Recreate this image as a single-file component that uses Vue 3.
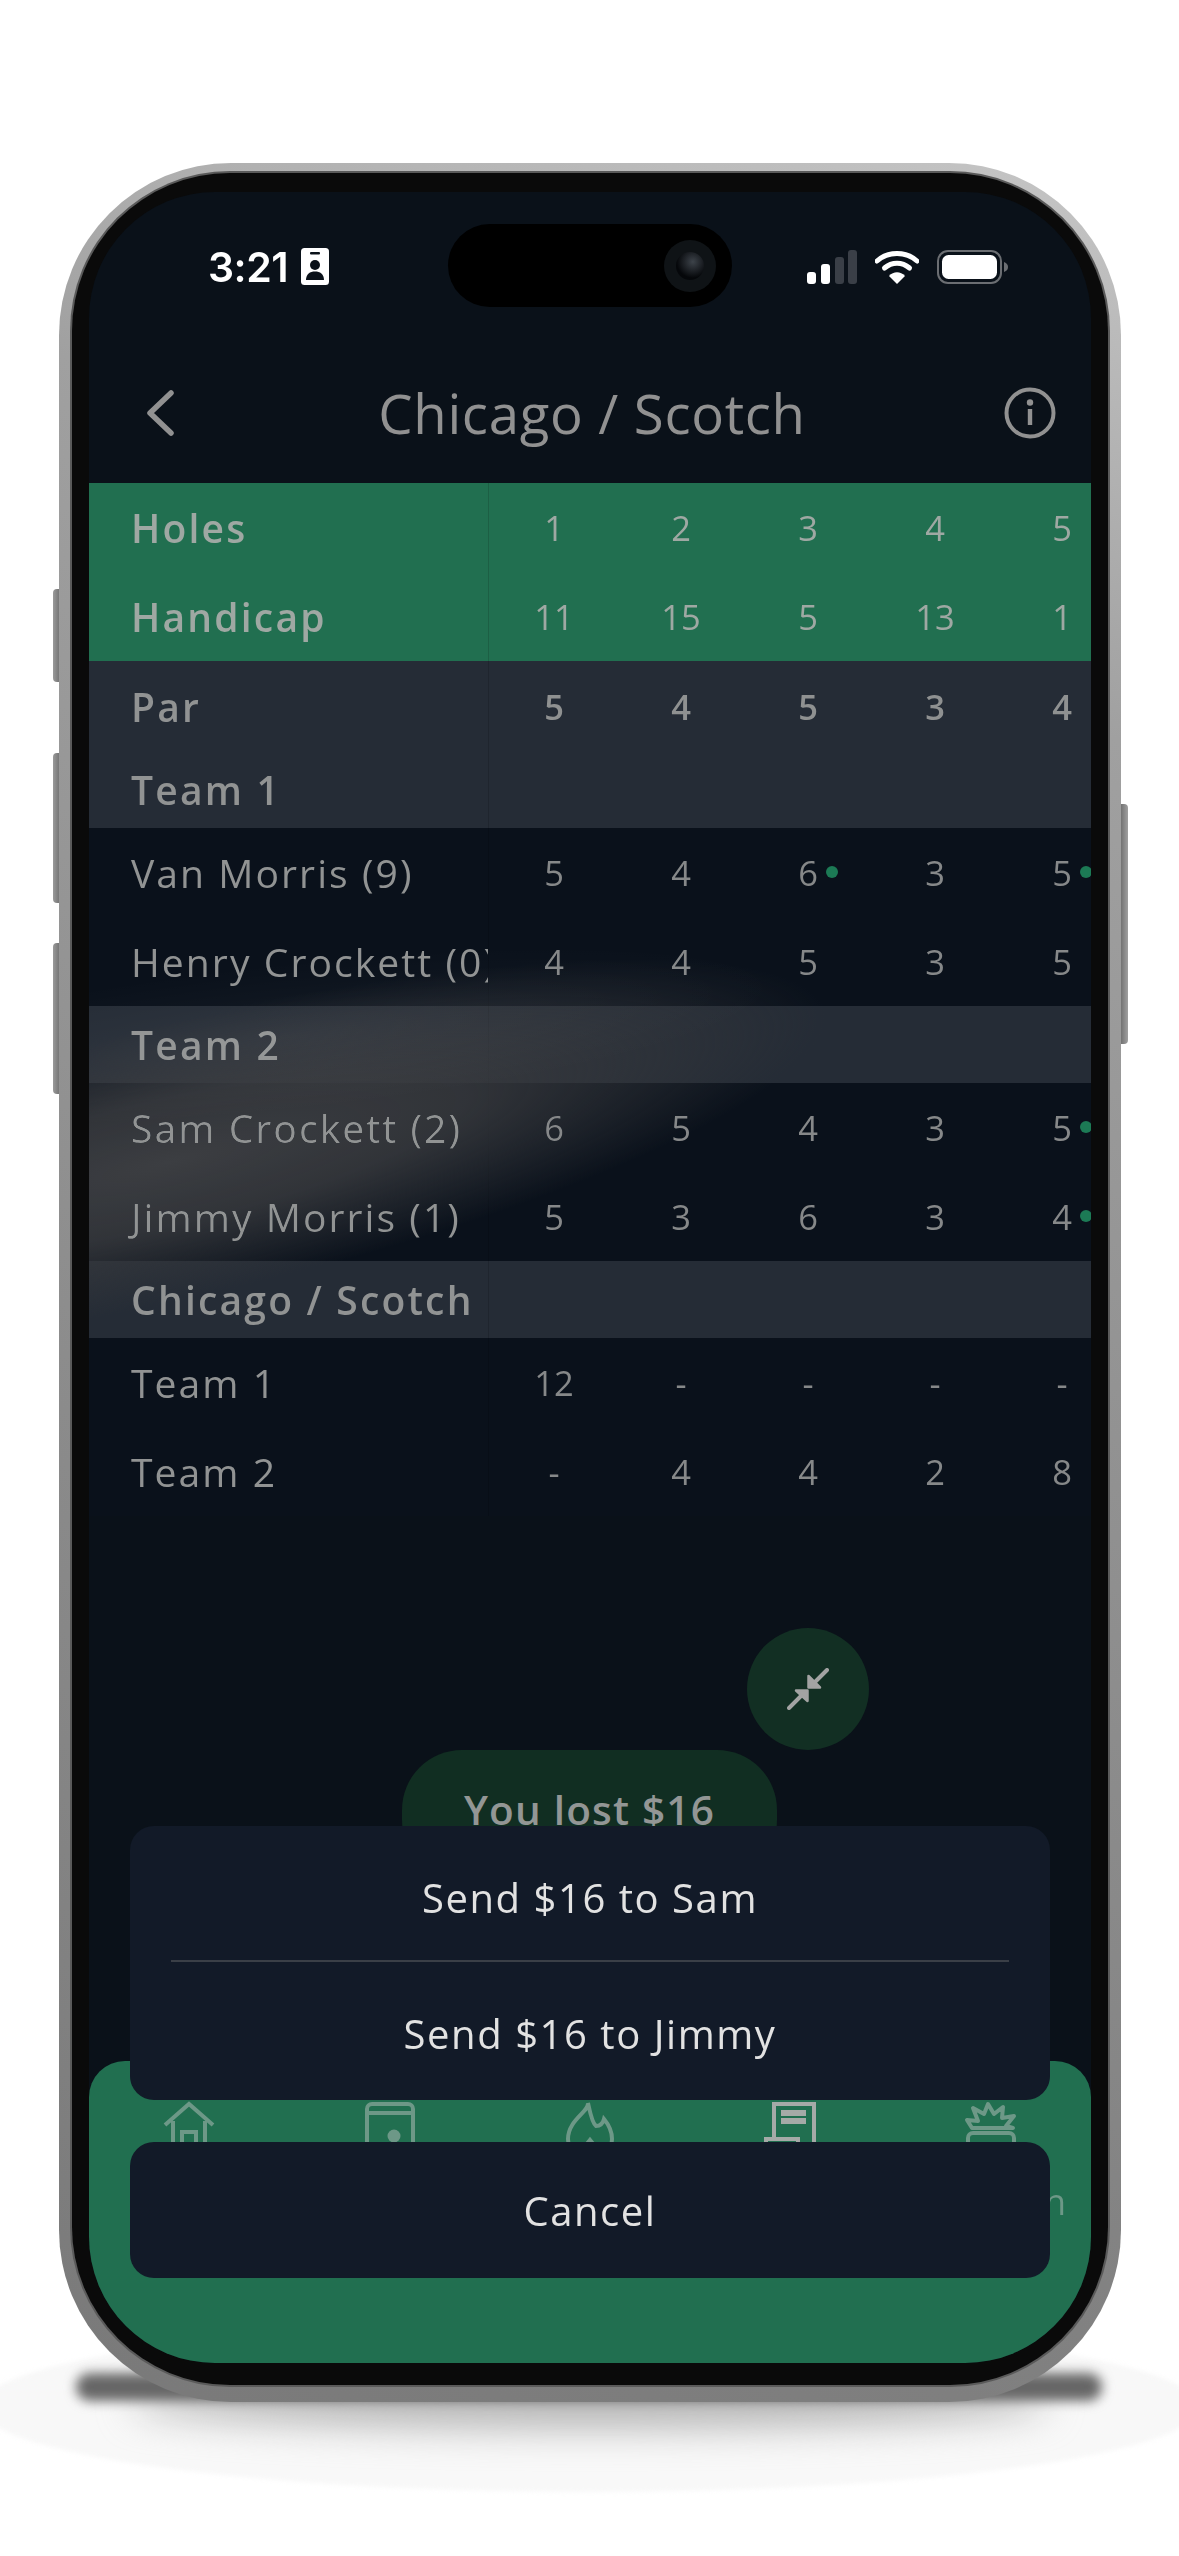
<script setup>
const holes = ['1', '2', '3', '4', '5']
const handicap = ['11', '15', '5', '13', '1']
const par = ['5', '4', '5', '3', '4']
const sections = [
  { title: 'Team 1', rows: [
    { name: 'Van Morris (9)', scores: ['5', '4', '6', '3', '5'], dots: [2, 4] },
    { name: 'Henry Crockett (0)', scores: ['4', '4', '5', '3', '5'], dots: [] },
  ] },
  { title: 'Team 2', rows: [
    { name: 'Sam Crockett (2)', scores: ['6', '5', '4', '3', '5'], dots: [4] },
    { name: 'Jimmy Morris (1)', scores: ['5', '3', '6', '3', '4'], dots: [4] },
  ] },
  { title: 'Chicago / Scotch', rows: [
    { name: 'Team 1', scores: ['12', '-', '-', '-', '-'], dots: [] },
    { name: 'Team 2', scores: ['-', '4', '4', '2', '8'], dots: [] },
  ] },
]
</script>

<template>
  <div class="page">
    <div class="halo"></div>
    <div class="spread"></div>
    <div class="contact"></div>
    <i class="btn b1"></i><i class="btn b2"></i><i class="btn b3"></i><i class="btn b4"></i>
    <div class="phone">
      <div class="bezel">
        <div class="screen">
          <div class="status">
            <div class="time">
              <span>3:21</span>
              <svg class="badge" width="28" height="37" viewBox="0 0 28 37">
                <rect width="28" height="37" rx="3.500" fill="#fff" />
                <rect x="9" y="4" width="10" height="2.500" rx="1" fill="#0a1119" />
                <circle cx="14" cy="17" r="5" fill="#0a1119" />
                <path d="M5 32c0-6 4-8.500 9-8.500s9 2.500 9 8.500z" fill="#0a1119" />
              </svg>
            </div>
            <div class="sys">
              <svg width="50" height="34" viewBox="0 0 50 34">
                <rect x="0" y="22" width="9" height="12" rx="3" fill="#fff" />
                <rect x="14" y="14" width="9" height="20" rx="3" fill="#fff" />
                <rect x="28" y="7" width="9" height="27" rx="3" fill="#3a3f47" />
                <rect x="41" y="0" width="9" height="34" rx="3" fill="#3a3f47" />
              </svg>
              <svg width="44" height="34" viewBox="0 0 44 34">
                <path d="M2 11C13 1 31 1 42 11" fill="none" stroke="#fff" stroke-width="5" stroke-linecap="round" />
                <path d="M9.500 18C17 11.500 27 11.500 34.500 18" fill="none" stroke="#fff" stroke-width="5" stroke-linecap="round" />
                <path d="M14 26c4.500-5 11.500-5 16 0L22 34z" fill="#fff" />
              </svg>
              <svg width="71" height="34" viewBox="0 0 71 34">
                <rect x="1" y="1" width="63" height="32" rx="10" fill="none" stroke="#6b6e72" stroke-width="2" />
                <rect x="5" y="5" width="55" height="24" rx="6.500" fill="#fff" />
                <path d="M67 12c3 1 4 3 4 5s-1 4-4 5z" fill="#6b6e72" />
              </svg>
            </div>
          </div>
          <div class="island"><span class="lens"><span class="glint"></span></span></div>

          <header class="nav">
            <svg width="28" height="46" viewBox="0 0 28 46">
              <path d="M25 3 4 23l21 20" fill="none" stroke="#919191" stroke-width="5.500" stroke-linecap="round" stroke-linejoin="round" />
            </svg>
            <h1>Chicago / Scotch</h1>
            <svg width="52" height="52" viewBox="0 0 52 52">
              <circle cx="26" cy="26" r="23.500" fill="none" stroke="#919191" stroke-width="4" />
              <circle cx="26" cy="15.500" r="3.200" fill="#919191" />
              <rect x="23.800" y="22" width="4.400" height="16" fill="#919191" />
            </svg>
          </header>

          <div class="table">
            <div class="row head">
              <div class="label strong">Holes</div>
              <div v-for="n in holes" :key="n" class="cell">{{ n }}</div>
            </div>
            <div class="row head">
              <div class="label strong">Handicap</div>
              <div v-for="(n, i) in handicap" :key="i" class="cell">{{ n }}</div>
            </div>
            <div class="row band tall">
              <div class="label strong">Par</div>
              <div v-for="(n, i) in par" :key="i" class="cell strongcell">{{ n }}</div>
            </div>
            <template v-for="s in sections" :key="s.title">
              <div class="row band">
                <div class="label strong">{{ s.title }}</div>
              </div>
              <div v-for="r in s.rows" :key="r.name" class="row">
                <div class="label">{{ r.name }}</div>
                <div v-for="(n, i) in r.scores" :key="i" class="cell">
                  {{ n }}<i v-if="r.dots.includes(i)" class="dot"></i>
                </div>
              </div>
            </template>
          </div>

          <div class="glare"></div>
          <div class="glare-soft"></div>

          <button class="fab">
            <svg width="42" height="42" viewBox="0 0 42 42">
              <path d="M40 2 27 15" stroke="#a3a3a3" stroke-width="4" stroke-linecap="round" fill="none" />
              <path d="M21.500 8v11.500H33z" fill="#a3a3a3" stroke="#a3a3a3" stroke-width="2.500" stroke-linejoin="round" />
              <path d="M2 40l12-12" stroke="#a3a3a3" stroke-width="4" stroke-linecap="round" fill="none" />
              <path d="M20.500 33V22.500H9z" fill="#a3a3a3" stroke="#a3a3a3" stroke-width="2.500" stroke-linejoin="round" />
            </svg>
          </button>
          <div class="pill">You lost $16</div>

          <nav class="tabs">
            <div class="tab">
              <svg width="52" height="60" viewBox="0 0 52 60" fill="none" stroke="#6d9887" stroke-width="4">
                <path d="M2 24 26 3l24 21" />
                <path d="M10 20v40M42 20v40" />
                <path d="M19 60V31h14v29" />
              </svg>
            </div>
            <div class="tab">
              <svg width="52" height="60" viewBox="0 0 52 60" fill="none" stroke="#6d9887" stroke-width="4">
                <rect x="3" y="3" width="46" height="70" rx="5" />
                <path d="M3 12h46" />
                <circle cx="30" cy="35" r="6.500" fill="#6d9887" stroke="none" />
              </svg>
            </div>
            <div class="tab">
              <svg width="52" height="60" viewBox="0 0 52 60" fill="none" stroke="#6d9887" stroke-width="4">
                <path d="M24 2c1 9-20 17-20 36 0 12 10 20 22 20s22-8 22-20c0-8-3-14-8-20-1 4-3 7-8 7-4-3-6-14-8-23z" />
                <path d="M14 60c-2-8 6-13 12-21 6 8 14 13 12 21" />
              </svg>
            </div>
            <div class="tab">
              <svg width="52" height="60" viewBox="0 0 52 60" fill="none" stroke="#a5aaa7" stroke-width="4">
                <path d="M10 38V3h40v57" />
                <path d="M0 38h34v22M2 38v22" />
                <path d="M17 12h25M17 20h25" stroke-width="6" />
              </svg>
            </div>
            <div class="tab last">
              <svg width="54" height="60" viewBox="0 0 54 60" fill="none" stroke="#6d9887" stroke-width="4" stroke-linejoin="round">
                <path d="M3 19l11 1-5-13 11 6 4-10 6 10 9-7-1 11 12-2-8 10 7 2H8z" />
                <rect x="4" y="32" width="46" height="40" rx="5" />
              </svg>
              <span class="tab-label">n</span>
            </div>
          </nav>

          <div class="sheet">
            <div class="group">
              <button class="action first">Send $16 to Sam</button>
              <div class="divider"></div>
              <button class="action second">Send $16 to Jimmy</button>
            </div>
            <button class="action cancel">Cancel</button>
          </div>
        </div>
      </div>
    </div>
  </div>
</template>

<style scoped>
.page {
  position: relative;
  width: 1179px;
  height: 2556px;
  background: #fff;
  overflow: hidden;
  padding: 163px 0 0 59px;
  box-sizing: border-box;
  font-family: "Open Sans", "Noto Sans", sans-serif;
}
.halo {
  position: absolute;
  left: -20px;
  top: 2322px;
  width: 1219px;
  height: 170px;
  border-radius: 50%;
  background: #f8f8f8;
  filter: blur(2px);
}
.spread {
  position: absolute;
  left: 130px;
  top: 2380px;
  width: 920px;
  height: 48px;
  border-radius: 50%;
  background: #b5b5b5;
  filter: blur(18px);
}
.contact {
  position: absolute;
  left: 76px;
  top: 2373px;
  width: 1026px;
  height: 28px;
  border-radius: 14px;
  background: #666;
  filter: blur(6px);
}
.btn {
  position: absolute;
  width: 10px;
  background: linear-gradient(90deg, #9a9a9a, #5f5f5f);
  border-radius: 4px 0 0 4px;
}
.b1 { left: 53px; top: 589px; height: 93px; }
.b2 { left: 53px; top: 753px; height: 150px; }
.b3 { left: 53px; top: 943px; height: 151px; }
.b4 { left: 1118px; top: 804px; height: 240px; border-radius: 0 4px 4px 0; background: linear-gradient(90deg, #5f5f5f, #a0a0a0); }

.phone {
  position: relative;
  width: 1062px;
  height: 2239px;
  box-sizing: border-box;
  padding: 10px 13px 17px;
  border-radius: 172px;
  background: linear-gradient(200deg, #c6c6c6 0%, #a0a0a0 22%, #8c8c8c 60%, #797979 100%);
}
.bezel {
  height: 100%;
  box-sizing: border-box;
  padding: 19px 17px 22px;
  border-radius: 158px;
  background: #0a0a0a;
  box-shadow: 0 0 0 2px #5a5a5a;
}
.screen {
  position: relative;
  height: 100%;
  border-radius: 126px;
  overflow: hidden;
  background: #0a1119;
}

.status {
  height: 150px;
  display: flex;
  align-items: center;
  justify-content: space-between;
  padding: 0 83px 0 119px;
}
.time {
  display: flex;
  align-items: center;
  gap: 13px;
  color: #fff;
  font: 600 41px Inter, sans-serif;
  letter-spacing: -.5px;
}
.badge { margin-top: -2px; }
.sys {
  display: flex;
  align-items: center;
  gap: 18px;
}
.island {
  position: absolute;
  left: 359px;
  top: 32px;
  width: 284px;
  height: 83px;
  border-radius: 42px;
  background: #000;
}
.lens {
  position: absolute;
  right: 16px;
  top: 16px;
  width: 52px;
  height: 52px;
  border-radius: 50%;
  background: #0f1316;
}
.glint {
  position: absolute;
  left: 12px;
  top: 12px;
  width: 28px;
  height: 28px;
  border-radius: 50%;
  background: radial-gradient(circle at 60% 35%, #3d434a, #05070a 65%);
}

.nav {
  height: 142px;
  margin-bottom: -5px;
  display: flex;
  align-items: center;
  justify-content: space-between;
  padding: 0 35px 4px 57px;
}
.nav h1 {
  margin: 0 0 0 6px;
  color: #919191;
  font-size: 54.500px;
  font-weight: 400;
  letter-spacing: .7px;
}

.table { width: 100%; overflow: hidden; }
.row {
  display: grid;
  grid-template-columns: 400px repeat(5, 127px);
  height: 89px;
  align-items: center;
  background: #0a111b;
}
.row.band { height: 77px; background: #252c36; }
.row.band.tall { height: 90px; }
.row.head { background: #216f50; }
.label {
  height: 100%;
  display: flex;
  align-items: center;
  box-sizing: border-box;
  padding-left: 42px;
  overflow: hidden;
  white-space: nowrap;
  color: #919393;
  font-size: 39.100px;
  letter-spacing: 2.050px;
  border-right: 1px solid rgba(0, 0, 0, .14);
}
.label.strong { font-weight: 600; font-size: 39px; letter-spacing: 2.200px; }
.head .label, .head .cell { color: #9fa8a3; }
.cell {
  position: relative;
  padding-left: 3px;
  text-align: center;
  color: #868889;
  font-size: 34.500px;
}
.strongcell { font-weight: 600; color: #8f9191; }
.dot {
  position: absolute;
  left: 83px;
  top: 17px;
  width: 12px;
  height: 12px;
  border-radius: 50%;
  background: #1c7a55;
}

.glare {
  position: absolute;
  left: -600px;
  top: 830px;
  width: 1360px;
  height: 280px;
  transform: rotate(-13deg);
  border-radius: 50%;
  background: radial-gradient(ellipse closest-side, rgba(60, 62, 66, 1), rgba(56, 58, 62, .85) 45%, rgba(50, 52, 56, 0));
  mix-blend-mode: lighten;
  pointer-events: none;
}
.glare-soft {
  position: absolute;
  left: -300px;
  top: 770px;
  width: 1000px;
  height: 150px;
  transform: rotate(-6deg);
  border-radius: 50%;
  background: radial-gradient(ellipse closest-side, rgba(255, 255, 255, .045), rgba(255, 255, 255, 0));
  pointer-events: none;
}

.fab {
  position: absolute;
  left: 658px;
  top: 1436px;
  width: 122px;
  height: 122px;
  padding: 0;
  border: 0;
  border-radius: 50%;
  background: #122f23;
  display: flex;
  align-items: center;
  justify-content: center;
}
.pill {
  position: absolute;
  left: 313px;
  top: 1558px;
  width: 375px;
  height: 130px;
  box-sizing: border-box;
  padding-top: 32px;
  border-radius: 60px;
  background: #112e22;
  color: #939695;
  text-align: center;
  font-size: 40.500px;
  font-weight: 600;
  letter-spacing: 1.200px;
}

.tabs {
  position: absolute;
  left: 0;
  right: 0;
  bottom: 0;
  height: 302px;
  display: flex;
  padding-top: 40px;
  box-sizing: border-box;
  border-radius: 36px 36px 0 0;
  background: #216f50;
}
.tab {
  flex: 1;
  display: flex;
  flex-direction: column;
  align-items: center;
  height: 140px;
}
.tab svg { overflow: visible; }
.tab-label {
  align-self: flex-end;
  margin: 17px 25px 0 0;
  color: #6d9887;
  font-size: 36px;
  line-height: 48px;
}

.sheet {
  position: absolute;
  left: 41px;
  right: 41px;
  top: 1634px;
  display: flex;
  flex-direction: column;
  gap: 42px;
}
.group, .cancel {
  border-radius: 24px;
  background: #121a28;
}
.group { height: 274px; display: flex; flex-direction: column; }
.action {
  width: 100%;
  padding: 0;
  border: 0;
  background: transparent;
  color: #e2e2e2;
  font-family: inherit;
  font-size: 40px;
  letter-spacing: 1.550px;
}
.first { height: 134px; padding-top: 8px; }
.second { flex: 1; padding-top: 4px; }
.cancel { height: 136px; background: #121a28; }
.divider {
  height: 2px;
  margin: 0 41px;
  background: #3a3f47;
}
</style>

<style>
html, body { margin: 0; background: #fff; }
</style>
